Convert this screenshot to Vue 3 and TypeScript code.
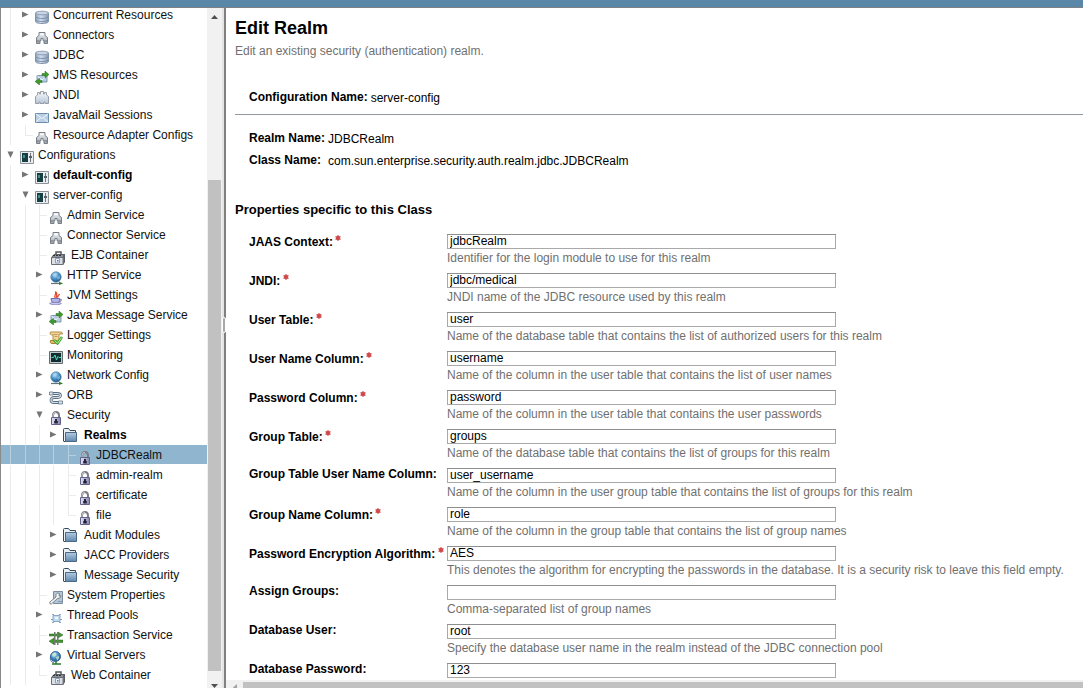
<script setup lang="ts">
import { ref } from 'vue'

interface TreeNode {
  label: string
  icon: string
  /** Guides drawn left of the node: "|" is a line, "." is an empty cell. */
  guides: string
  /** closed / open show an expander; leaf / last show a connector line. */
  kind: 'closed' | 'open' | 'leaf' | 'last'
  bold?: boolean
}

interface Field {
  id: string
  label: string
  required: boolean
  value: string
  help?: string
}

const nodes: TreeNode[] = [
  { label: 'Concurrent Resources', icon: 'database', guides: '|', kind: 'closed' },
  { label: 'Connectors', icon: 'connector', guides: '|', kind: 'closed' },
  { label: 'JDBC', icon: 'database', guides: '|', kind: 'closed' },
  { label: 'JMS Resources', icon: 'message', guides: '|', kind: 'closed' },
  { label: 'JNDI', icon: 'jndi', guides: '|', kind: 'closed' },
  { label: 'JavaMail Sessions', icon: 'mail', guides: '|', kind: 'closed' },
  { label: 'Resource Adapter Configs', icon: 'connector', guides: '|', kind: 'last' },
  { label: 'Configurations', icon: 'config', guides: '', kind: 'open' },
  { label: 'default-config', icon: 'config', guides: '|', kind: 'closed', bold: true },
  { label: 'server-config', icon: 'config', guides: '|', kind: 'open' },
  { label: 'Admin Service', icon: 'connector', guides: '||', kind: 'leaf' },
  { label: 'Connector Service', icon: 'connector', guides: '||', kind: 'leaf' },
  { label: 'EJB Container', icon: 'container', guides: '||', kind: 'leaf' },
  { label: 'HTTP Service', icon: 'globe', guides: '||', kind: 'closed' },
  { label: 'JVM Settings', icon: 'java', guides: '||', kind: 'leaf' },
  { label: 'Java Message Service', icon: 'message', guides: '||', kind: 'closed' },
  { label: 'Logger Settings', icon: 'logger', guides: '||', kind: 'leaf' },
  { label: 'Monitoring', icon: 'monitor', guides: '||', kind: 'leaf' },
  { label: 'Network Config', icon: 'globe', guides: '||', kind: 'closed' },
  { label: 'ORB', icon: 'orb', guides: '||', kind: 'closed' },
  { label: 'Security', icon: 'lock', guides: '||', kind: 'open' },
  { label: 'Realms', icon: 'folder', guides: '|||', kind: 'closed', bold: true },
  { label: 'JDBCRealm', icon: 'lock', guides: '||||', kind: 'leaf' },
  { label: 'admin-realm', icon: 'lock', guides: '||||', kind: 'leaf' },
  { label: 'certificate', icon: 'lock', guides: '||||', kind: 'leaf' },
  { label: 'file', icon: 'lock', guides: '||||', kind: 'last' },
  { label: 'Audit Modules', icon: 'folder', guides: '|||', kind: 'closed' },
  { label: 'JACC Providers', icon: 'folder', guides: '|||', kind: 'closed' },
  { label: 'Message Security', icon: 'folder', guides: '|||', kind: 'closed' },
  { label: 'System Properties', icon: 'properties', guides: '||', kind: 'leaf' },
  { label: 'Thread Pools', icon: 'threads', guides: '||', kind: 'closed' },
  { label: 'Transaction Service', icon: 'transaction', guides: '||', kind: 'leaf' },
  { label: 'Virtual Servers', icon: 'server', guides: '||', kind: 'closed' },
  { label: 'Web Container', icon: 'container', guides: '||', kind: 'last' },
]

const selected = ref('JDBCRealm')

const fields = ref<Field[]>([
  { id: 'jaas', label: 'JAAS Context:', required: true, value: 'jdbcRealm', help: 'Identifier for the login module to use for this realm' },
  { id: 'jndi-name', label: 'JNDI:', required: true, value: 'jdbc/medical', help: 'JNDI name of the JDBC resource used by this realm' },
  { id: 'user-table', label: 'User Table:', required: true, value: 'user', help: 'Name of the database table that contains the list of authorized users for this realm' },
  { id: 'user-name', label: 'User Name Column:', required: true, value: 'username', help: 'Name of the column in the user table that contains the list of user names' },
  { id: 'password', label: 'Password Column:', required: true, value: 'password', help: 'Name of the column in the user table that contains the user passwords' },
  { id: 'group-table', label: 'Group Table:', required: true, value: 'groups', help: 'Name of the database table that contains the list of groups for this realm' },
  { id: 'group-user', label: 'Group Table User Name Column:', required: false, value: 'user_username', help: 'Name of the column in the user group table that contains the list of groups for this realm' },
  { id: 'group-name', label: 'Group Name Column:', required: true, value: 'role', help: 'Name of the column in the group table that contains the list of group names' },
  { id: 'encryption', label: 'Password Encryption Algorithm:', required: true, value: 'AES', help: 'This denotes the algorithm for encrypting the passwords in the database. It is a security risk to leave this field empty.' },
  { id: 'assign', label: 'Assign Groups:', required: false, value: '', help: 'Comma-separated list of group names' },
  { id: 'db-user', label: 'Database User:', required: false, value: 'root', help: 'Specify the database user name in the realm instead of the JDBC connection pool' },
  { id: 'db-password', label: 'Database Password:', required: false, value: '123' },
])
</script>

<template>
  <div class="shell">
    <svg class="sprite" aria-hidden="true">
      <defs>
        <linearGradient id="blue" x1="0" x2="1" y1="0" y2="0">
          <stop offset="0" stop-color="#8fa5c2" /><stop offset=".4" stop-color="#d3deec" /><stop offset="1" stop-color="#8498b4" />
        </linearGradient>
        <linearGradient id="folderFill" x1="0" x2="0" y1="0" y2="1">
          <stop offset="0" stop-color="#b4cbe0" /><stop offset="1" stop-color="#5f86ad" />
        </linearGradient>
        <linearGradient id="steel" x1="0" x2="0" y1="0" y2="1">
          <stop offset="0" stop-color="#f6f7f8" /><stop offset="1" stop-color="#9aa4b0" />
        </linearGradient>
        <linearGradient id="castle" x1="0" x2="0" y1="0" y2="1">
          <stop offset="0" stop-color="#fafbfc" /><stop offset="1" stop-color="#b5c5d6" />
        </linearGradient>
        <radialGradient id="ball" cx=".4" cy=".3" r=".7">
          <stop offset="0" stop-color="#c4e4f8" /><stop offset=".5" stop-color="#4f97cc" /><stop offset="1" stop-color="#1d5488" />
        </radialGradient>
        <linearGradient id="lockFill" x1="0" x2="1" y1="0" y2="0">
          <stop offset="0" stop-color="#e4e4f6" /><stop offset="1" stop-color="#8484ac" />
        </linearGradient>
      </defs>
      <symbol id="database" viewBox="0 0 14 14">
        <path d="M.5 3v8.500c0 1.200 2.900 2 6.500 2s6.500-.8 6.500-2V3z" fill="url(#blue)" stroke="#8391a6" />
        <ellipse cx="7" cy="3" rx="6.500" ry="1.800" fill="#c9d6e6" stroke="#8f9db0" />
        <path d="M1 7c1 1 3.500 1.500 6 1.500s5-.5 6-1.500M1 10c1 1 3.500 1.500 6 1.500s5-.5 6-1.500" fill="none" stroke="#6f84a3" stroke-width=".8" />
      </symbol>
      <symbol id="connector" viewBox="0 0 14 14">
        <path d="M1.500 13.500V7.500L4 5.500v-3h6v3l2.500 2v6H9V10.500H8V8.500H6v2H5v3z" fill="url(#steel)" stroke="#797f88" />
        <path d="M5.500 4.500h3" stroke="#fff" fill="none" />
        <path d="M1.500 11h3M9.500 11h3" stroke="#70767f" fill="none" />
      </symbol>
      <symbol id="message" viewBox="0 0 14 14">
        <path d="M2 4.500h10v6.500H2z" fill="#b8cce0" stroke="#8199b3" />
        <path d="M2.500 5L7 9l4.500-4" fill="none" stroke="#eef4fa" />
        <path d="M7 2.500h3V0l4 3.500L10 7V4.500H7zM7 11.500H4.500V14L0 10.500l4.500-3v2H7z" fill="#3f9a2c" stroke="#25701a" stroke-width=".5" />
      </symbol>
      <symbol id="jndi" viewBox="0 0 14 14">
        <path d="M.5 13.500V6.500L2.500 5V2.500h2V4h1V1.500h3V4h1V2.500h2V5l2 1.500v7H10V12H9v1.500H5V12H4v1.500z" fill="url(#castle)" stroke="#989ea7" />
      </symbol>
      <symbol id="mail" viewBox="0 0 14 14">
        <path d="M.5 3.500h13v9H.5z" fill="#b9cfe4" stroke="#6d8eae" />
        <path d="M1 4l6 4.500L13 4M1 12l4.500-4M13 12L8.500 8" fill="none" stroke="#f0f6fb" />
      </symbol>
      <symbol id="config" viewBox="0 0 14 14">
        <path d="M.5 1.500h13v12H.5z" fill="#e9edf0" stroke="#8b9298" />
        <path d="M2 3h6v9H2z" fill="#153f43" />
        <path d="M3 5h2v3H3z" fill="#4a8d8b" />
        <path d="M10.500 3v9" stroke="#6c747a" />
        <path d="M9 6h3v2H9z" fill="#596168" />
      </symbol>
      <symbol id="container" viewBox="0 0 14 14">
        <path d="M5 4V1h5v3" fill="none" stroke="#55585c" stroke-width="1.500" />
        <path d="M.5 6.500L3 3.500h10.500L12 6.500zM12 6.500l1.500-3V11L12 13.500z" fill="#8d9299" stroke="#5a5e64" />
        <path d="M.5 6.500H12v7H.5z" fill="#dcdfe5" stroke="#6c7076" />
        <path d="M4.500 7.500h4v4.500h-4z" fill="#eef2f8" stroke="#8aa0be" />
        <path d="M6 9h1.500v1.500H6z" fill="#5478a5" />
        <path d="M2 4.500h9" stroke="#303438" stroke-dasharray="2 1" />
      </symbol>
      <symbol id="globe" viewBox="0 0 14 14">
        <circle cx="7" cy="6" r="5.200" fill="url(#ball)" stroke="#5b8bb0" stroke-width=".8" />
        <path d="M4 3q2-2 4-1L7 5 4.500 6zM8 6l3-1v2.500L9 9z" fill="#a5d5ed" opacity=".5" />
        <path d="M2 12.500h9" stroke="#66737a" stroke-width="1.200" />
        <path d="M10 10.500l4 2-4 1.500z" fill="#347f26" />
      </symbol>
      <symbol id="java" viewBox="0 0 14 14">
        <path d="M6.500 7C4 5 8 3.500 6.500.5 9.500 3 6.500 4.500 8 7M9 6.500C8 5 10 4.500 10.500 3" fill="none" stroke="#e1472d" stroke-width="1.300" />
        <path d="M2 7.500h8.500v2q0 2-2 2H4.500Q2 11.500 2 7.500z" fill="#b4b4e4" stroke="#7070b2" />
        <path d="M10.500 8q3 0 1.500 2-1 .8-2 .5" fill="none" stroke="#7070b2" />
        <ellipse cx="6.500" cy="12.500" rx="5.800" ry="1.200" fill="#c6c6ee" stroke="#7272b3" stroke-width=".7" />
      </symbol>
      <symbol id="logger" viewBox="0 0 14 14">
        <path d="M1.500 1h10q2 0 2 2H10v6.500H4V4Q0 4 1.500 1z" fill="#f0d798" stroke="#b58b45" />
        <path d="M4.500 3.500h4M5.500 5.500h3" stroke="#c09a5a" />
        <path d="M1.500 9.500h5v3h-4Q.5 12 1.500 9.500z" fill="#dfba68" stroke="#a97d35" />
        <path d="M5 9l3.500 3.500L13 6" fill="none" stroke="#3ca52b" stroke-width="2.500" />
        <path d="M5.500 9.500l3 2.700L12.700 6.500" fill="none" stroke="#c9f5ae" stroke-width=".9" />
      </symbol>
      <symbol id="monitor" viewBox="0 0 14 14">
        <path d="M.5 1.500h13v12H.5z" fill="#c3c8cb" stroke="#666d71" />
        <path d="M2 3h10v9H2z" fill="#102d31" />
        <path d="M2.500 7.500h2L6 5l1.500 5L9 6.500l1 1h2" fill="none" stroke="#50ddb7" />
      </symbol>
      <symbol id="orb" viewBox="0 0 14 14">
        <path d="M3 2.500h5q3.500 0 3.500 2t-3.500 2H5.500Q2 6.500 2 9t3 2.500h5" fill="none" stroke="#576e82" stroke-width="2.800" />
        <path d="M3 2.500h5q3.500 0 3.500 2t-3.500 2H5.500Q2 6.500 2 9t3 2.500h5" fill="none" stroke="#d3e0ea" stroke-width="1.200" />
        <path d="M.5 1h3.500v3H.5zM9.500 10h4v3h-4z" fill="#dce6ee" stroke="#5f7587" stroke-width=".8" />
      </symbol>
      <symbol id="lock" viewBox="0 0 14 14">
        <path d="M4 7V4.500Q4 1 7 1t3 3.500V7" fill="none" stroke="#7c7c86" stroke-width="2" />
        <path d="M4 7V4.500Q4 1.200 7 1.200" fill="none" stroke="#d4d4dd" stroke-width=".8" />
        <path d="M2.500 6.500h9v7h-9z" fill="url(#lockFill)" stroke="#63638a" />
        <path d="M6 8h2v2h.8v2.500H5.200V10H6z" fill="#23233c" />
      </symbol>
      <symbol id="folder" viewBox="0 0 14 14">
        <path d="M.5 13V1.500q0-1 1-1h4l1.500 2h5.500V5" fill="#e9f0f5" stroke="#34495a" />
        <path d="M2.500 4.500h11v9h-11z" fill="url(#folderFill)" stroke="#4a6884" />
        <path d="M.5 13.500h2" stroke="#34495a" />
      </symbol>
      <symbol id="properties" viewBox="0 0 14 14">
        <path d="M4.500.5h9v12h-9z" fill="#b3c5d8" stroke="#7c8c9d" />
        <path d="M9 10.500h4" stroke="#8297ad" />
        <path d="M10.500 2.500L8.500 2Q6 3 7 6L.8 11q-.5 2 1.400 2.200L8.500 7.500q3 .3 3.500-2.700L10 5z" fill="#f2f4f5" stroke="#72787f" stroke-width=".9" />
      </symbol>
      <symbol id="threads" viewBox="0 0 14 14">
        <path d="M2 9.500h11" stroke="#7f9dba" />
        <path d="M4 5.500h7v6H4z" fill="#c1dcf0" stroke="#8ba8c3" />
        <path d="M3 4.500h2M10 4.500h2M3 12.500h2M10 12.500h2" stroke="#8ba8c3" />
        <path d="M6 7h3v2H6z" fill="#f3fafe" />
      </symbol>
      <symbol id="transaction" viewBox="0 0 14 14">
        <path d="M0 3h9V1l5 3-5 3V5H0zM14 9H5V7l-5 3.200L5 13.500v-2h9z" fill="#43962f" stroke="#286b1c" stroke-width=".5" />
        <path d="M5 1h1.500v13H5zM8 1h1.500v13H8z" fill="#6f7a70" />
      </symbol>
      <symbol id="server" viewBox="0 0 14 14">
        <path d="M5 12Q.5 10.500 1.500 5" fill="none" stroke="#4c6f96" />
        <circle cx="6.500" cy="5.500" r="5" fill="url(#ball)" stroke="#2b5b99" stroke-width=".9" />
        <path d="M3 3q2-2 4-1v2L5 6 3.500 5zM7 6l3-1v2.500L8 9.500z" fill="#cdecc3" opacity=".8" />
        <path d="M7 10.500v2M3 13h9" stroke="#2a7a2c" stroke-width="1.500" />
      </symbol>
    </svg>

    <header class="masthead"></header>

    <div class="panes">
      <nav class="sidebar" aria-label="Navigation tree">
        <ul class="tree">
          <li
            v-for="node in nodes"
            :key="node.label"
            class="node"
            :class="{ selected: node.label === selected }"
          >
            <span
              v-for="(guide, i) in node.guides"
              :key="i"
              class="guide"
              :class="{ line: guide === '|' }"
            ></span>
            <span class="joint" :class="node.kind">
              <button
                v-if="node.kind === 'closed' || node.kind === 'open'"
                class="toggle"
                type="button"
                :aria-label="`Toggle ${node.label}`"
              >
                <svg viewBox="0 0 7 7" aria-hidden="true">
                  <path v-if="node.kind === 'closed'" d="M0 0.500L6.500 3.500 0 6.500z" />
                  <path v-else d="M0.500 0.500h6L3.500 7z" />
                </svg>
              </button>
            </span>
            <svg class="icon" :class="node.icon" aria-hidden="true"><use :href="`#${node.icon}`" /></svg>
            <a
              href="#"
              class="name"
              :class="{ bold: node.bold }"
              @click.prevent="selected = node.label"
            >{{ node.label }}</a>
          </li>
        </ul>
        <div class="vbar" aria-hidden="true">
          <svg class="arrow" viewBox="0 0 7 4"><path d="M0 4L3.500 0 7 4z" /></svg>
          <div class="vtrack"><div class="vthumb"></div></div>
          <svg class="arrow" viewBox="0 0 7 4"><path d="M0 0h7L3.500 4z" /></svg>
        </div>
        <div class="splitter"><span class="grip"></span></div>
      </nav>

      <main class="content">
        <div class="page">
          <h1>Edit Realm</h1>
          <p class="intro">Edit an existing security (authentication) realm.</p>

          <dl class="summary">
            <dt>Configuration Name:</dt>
            <dd>server-config</dd>
          </dl>
          <hr />
          <dl class="summary">
            <dt>Realm Name:</dt>
            <dd>JDBCRealm</dd>
            <dt>Class Name:</dt>
            <dd>com.sun.enterprise.security.auth.realm.jdbc.JDBCRealm</dd>
          </dl>

          <h2>Properties specific to this Class</h2>
          <form class="fields" @submit.prevent>
            <div v-for="field in fields" :key="field.id" class="field">
              <label :for="field.id" :class="{ required: field.required }">
                {{ field.label }}
                <svg v-if="field.required" class="star" viewBox="0 0 6 6" role="img" aria-label="required">
                  <circle cx="3" cy="3" r="2" />
                  <path d="M3 0v6M.4 1.500l5.200 3M.4 4.500l5.200-3" />
                </svg>
              </label>
              <div class="entry">
                <input :id="field.id" v-model="field.value" type="text" />
                <p v-if="field.help" class="help">{{ field.help }}</p>
              </div>
            </div>
          </form>
        </div>
        <div class="hbar" aria-hidden="true">
          <svg class="left" viewBox="0 0 4 7"><path d="M4 0v7L0 3.500z" /></svg>
          <div class="hthumb"></div>
        </div>
      </main>
    </div>
  </div>
</template>

<style>
body {
  margin: 0;
}
</style>

<style scoped>
.shell {
  display: flex;
  flex-direction: column;
  height: 100vh;
  overflow: hidden;
  background: #fff;
  color: #000;
  font: 12px/16px "Liberation Sans", Arial, sans-serif;
}
.sprite {
  position: absolute;
  width: 0;
  height: 0;
}
.masthead {
  flex: none;
  height: 7px;
  background: #5a87a7;
  border-bottom: 1px solid #7d8287;
}
.panes {
  display: flex;
  flex: 1;
  min-height: 0;
}
.sidebar {
  display: flex;
  flex: none;
  width: 225px;
  border-left: 1px solid #8a8a8a;
  overflow: hidden;
}
.tree {
  flex: 1;
  min-width: 0;
  margin: -3px 0 0;
  padding: 0;
  list-style: none;
}
.node {
  display: flex;
  height: 20px;
  --line: #ebebeb;
}
.node.selected {
  height: 19px;
  margin-bottom: 1px;
  background: #8fb5cf;
  --line: #b4cfe0;
}
.guide,
.joint {
  flex: none;
  box-sizing: border-box;
  width: 14px;
  position: relative;
}
.guide:nth-child(1),
.guide:nth-child(4) {
  width: 15px;
}
.guide.line::before,
.leaf::before,
.last::before {
  content: "";
  position: absolute;
  left: 9px;
  top: 0;
  bottom: 0;
  border-left: 1px solid var(--line);
}
.joint {
  width: 19px;
}
.last::before {
  bottom: 10px;
}
.leaf::after,
.last::after {
  content: "";
  position: absolute;
  left: 9px;
  top: 10px;
  width: 8px;
  border-top: 1px solid var(--line);
}
.toggle {
  display: block;
  margin: 6px 0 0 6px;
  padding: 0;
  border: 0;
  background: none;
}
.toggle svg {
  display: block;
  width: 7px;
  height: 7px;
  fill: #757575;
}
.icon {
  flex: none;
  width: 14px;
  height: 14px;
  margin: 6px 4px 0 0;
}
.icon.database,
.icon.connector,
.icon.config,
.icon.jndi,
.icon.mail,
.icon.monitor,
.icon.threads {
  margin-top: 5px;
}
.icon.container {
  margin: 6px 6px 0 2px;
}
.icon.folder {
  margin: 3px 7px 0 0;
}
.name {
  margin-top: 2px;
  color: #111;
  text-decoration: none;
  white-space: nowrap;
}
.bold {
  font-weight: bold;
  color: #000;
}
.vbar {
  display: flex;
  flex-direction: column;
  align-items: center;
  flex: none;
  width: 15px;
  background: #f1f1f1;
}
.arrow {
  flex: none;
  width: 7px;
  height: 4px;
  margin-top: 7px;
  fill: #505050;
}
.arrow:last-child {
  margin: 0;
}
.vtrack {
  display: flex;
  flex-direction: column;
  flex: 1;
  margin-bottom: 13px;
}
.vtrack::before {
  content: "";
  flex: 23;
}
.vthumb {
  flex: 70;
  width: 13px;
  background: #c1c1c1;
}
.splitter {
  display: flex;
  align-items: center;
  flex: none;
  box-sizing: border-box;
  width: 4px;
  border-right: 2px solid #808080;
  background: #e4e4e4;
}
.grip {
  flex: none;
  box-sizing: border-box;
  width: 4px;
  height: 16px;
  margin-top: -46px;
  border: 1px solid #fff;
  border-radius: 2px;
  background: #a8a8a8;
}
.content {
  display: flex;
  flex-direction: column;
  flex: 1;
  min-width: 0;
}
.page {
  flex: 1;
  min-height: 0;
  overflow: hidden;
  padding: 10px 0 0 9px;
}
h1 {
  margin: 0;
  font-size: 18px;
  line-height: 20px;
}
.intro {
  margin: 5px 0 30px;
  color: #707070;
}
.summary {
  display: grid;
  grid-template-columns: max-content 1fr;
  gap: 5px 3px;
  margin: 0 0 0 14px;
}
.summary dt {
  font-weight: bold;
}
.summary dd {
  margin: 0;
  padding-top: 1px;
}
hr {
  margin: 8px 0 15px;
  border: 0;
  border-top: 1px solid #8f999f;
}
h2 {
  margin: 33px 0 16px;
  font-size: 13px;
  line-height: 16px;
}
.fields {
  display: flex;
  flex-direction: column;
  gap: 7px;
  margin-left: 14px;
}
.field {
  display: flex;
  height: 32px;
}
label {
  flex: none;
  width: 198px;
  margin-top: -2px;
  font-weight: bold;
  white-space: nowrap;
}
label.required {
  margin-top: 0;
}
.star {
  width: 6px;
  height: 6px;
  margin-left: -1px;
  vertical-align: 5px;
  fill: #d0484a;
  stroke: #d0484a;
  stroke-width: 0.8;
}
.entry {
  flex: 1;
  min-width: 0;
}
/* The frame is an inset shadow so that the text line gets the full height. */
input {
  display: block;
  box-sizing: border-box;
  width: 389px;
  max-width: 100%;
  height: 15px;
  padding: 0 3px;
  border: 0;
  outline: 0;
  background: #fff;
  box-shadow: inset 0 1px #8f8f8f, inset 0 0 0 1px #a9a9a9;
  color: #000;
  font: inherit;
  line-height: 15px;
}
.help {
  margin: 1px 0 0;
  color: #707070;
  white-space: nowrap;
}
.hbar {
  display: flex;
  flex: none;
  height: 8px;
  background: #f1f1f1;
}
.left {
  flex: none;
  width: 4px;
  height: 7px;
  margin: 4px 6px 0 7px;
  fill: #a3a3a3;
}
.hthumb {
  flex: 1;
  margin-top: 2px;
  background: #c1c1c1;
}
</style>
